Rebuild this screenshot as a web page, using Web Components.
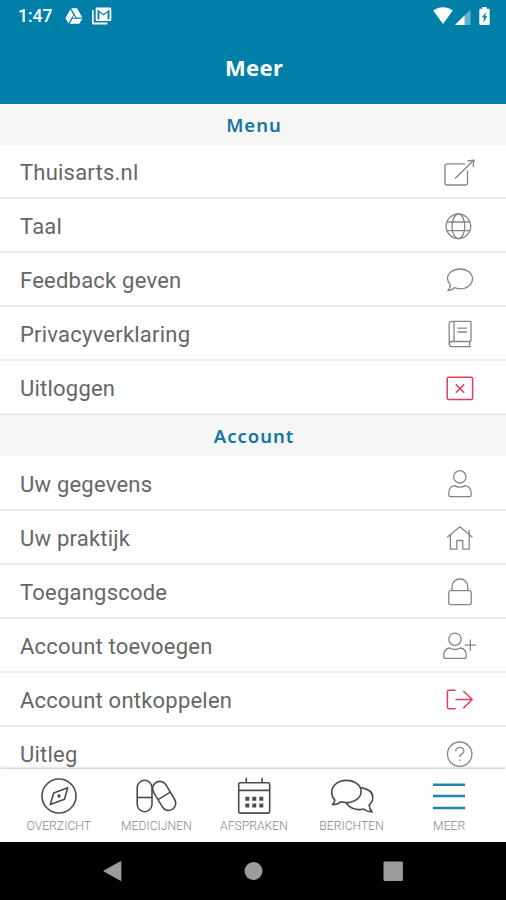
<!DOCTYPE html>
<html lang="nl">
<head>
<meta charset="utf-8">
<title>Meer</title>
<style>
    html, body{
        margin: 0;
        height: 100%;
        overflow: hidden;
        font-family: Roboto, "Liberation Sans", sans-serif;
    }
</style>
</head>
<body>
<phone-screen>
    <status-bar slot="top" time="1:47"></status-bar>
    <title-bar slot="top">Meer</title-bar>
    <menu-section label="Menu">
        <menu-row icon="external">Thuisarts.nl</menu-row>
        <menu-row icon="globe">Taal</menu-row>
        <menu-row icon="comment">Feedback geven</menu-row>
        <menu-row icon="book">Privacyverklaring</menu-row>
        <menu-row icon="close" danger>Uitloggen</menu-row>
    </menu-section>
    <menu-section label="Account">
        <menu-row icon="user">Uw gegevens</menu-row>
        <menu-row icon="home">Uw praktijk</menu-row>
        <menu-row icon="lock">Toegangscode</menu-row>
        <menu-row icon="useradd">Account toevoegen</menu-row>
        <menu-row icon="exit" danger>Account ontkoppelen</menu-row>
        <menu-row icon="help">Uitleg</menu-row>
    </menu-section>
    <tab-bar slot="bottom">
        <tab-item icon="compass">OVERZICHT</tab-item>
        <tab-item icon="pills">MEDICIJNEN</tab-item>
        <tab-item icon="calendar">AFSPRAKEN</tab-item>
        <tab-item icon="chats">BERICHTEN</tab-item>
        <tab-item icon="menu" active>MEER</tab-item>
    </tab-bar>
    <android-nav slot="bottom"></android-nav>
</phone-screen>

<script>
// 40x40 icons for the list rows
const rowIcons = {
    external: '<path d="M25 11.8H7q-2 0-2 2V31q0 2 2 2h18.5q2 0 2-2V18.5M15 26.5 33.5 8.5M27.5 9l6.5-.8-1 7"/>',
    globe: '<circle cx="18.4" cy="20.3" r="12.3"/><ellipse cx="18.4" cy="20.3" rx="6.4" ry="12.3"/><path d="M6.8 16h23.2M6.8 24.7h23.2"/>',
    comment: '<path d="M10.3 24.7C8.4 22.9 7.5 21 7.5 18.6 7.5 13.2 13 9 20 9s12.5 4.2 12.5 9.8S27 28.8 20 28.8c-2 0-3.9-.4-5.5-1.1-1.4 1.7-3.7 2.7-6.7 2.9 1.7-1.7 2.6-3.6 2.5-5.9z"/>',
    book: '<path d="M31 27.5V8.5q0-1.2-1.2-1.2H12q-2.8 0-2.8 2.8v19.7q0 2.8 2.8 2.8h19M31 27.5H12q-2.8 0-2.8 2.5M14 7.3v20.2M29.5 27.5v5M17.5 14.2h9.5M17.5 18h9.5"/>',
    close: '<rect x="7.2" y="9.2" width="25.4" height="22.4" rx="1.5"/><path d="m15.8 16.4 8.4 8.4m0-8.4-8.4 8.4"/>',
    user: '<circle cx="19.8" cy="13.8" r="6.2"/><path d="M14.3 22.6c3.6 2 7.4 2 11 0 3.8.6 5.9 3.6 5.9 8v1.4q0 1.6-1.6 1.6H10.4q-1.6 0-1.6-1.6v-1.4c0-4.4 1.7-7.4 5.5-8z"/>',
    home: '<path d="m7.2 20.3 12.6-10.5 12.6 10.5M10.4 17.8v14.4h6.4v-8.7h6v8.7h6.4V17.8M29.2 17.3v-4.6"/>',
    lock: '<rect x="8.8" y="19.6" width="22.4" height="14" rx="2"/><path d="M12 19.6v-3.8c0-10.4 15.8-10.4 15.8 0v3.8"/>',
    useradd: '<circle cx="15" cy="14.2" r="6.1"/><path d="M9.6 23c3.6 2 7.2 2 10.8 0 3.8.6 5.8 3.4 5.8 7.2v1.6q0 1.6-1.6 1.6H5.4q-1.6 0-1.6-1.6v-1.6c0-3.8 2-6.6 5.8-7.2zM24.8 20.2h11M30.3 14.6v11.2"/>',
    exit: '<path d="M15.6 11.3H9q-1.6 0-1.6 1.6v15.2q0 1.6 1.6 1.6h6.6M15.5 20.5h16.7M23.4 12l8.8 8.5-8.8 8.6"/>',
    help: '<circle cx="19.7" cy="21.2" r="12.2"/><path d="M15.7 18.3c.1-5.2 8.3-5 8.2-.4 0 3-4.1 3-4.1 6.2M19.8 26.4v1.7"/>'
};

// 48x44 icons for the bottom tabs
const tabIcons = {
    compass: '<circle cx="24" cy="22" r="17"/><path d="M32.7 13.8 29.5 25.3 15.3 30.6 18.7 19z"/><circle cx="24" cy="22" r=".9" fill="currentColor"/>',
    pills: '<rect x="5.2" y="6.3" width="14.8" height="31.4" rx="7.4"/><path d="M5.2 23.5H20"/><g transform="rotate(-31 32 22)"><rect x="25" y="6.3" width="14.4" height="31.4" rx="7.2"/><path d="M25 22h14.4"/></g>',
    calendar: '<rect x="8.7" y="8.7" width="31" height="30.4" rx="1.5"/><path d="M8.7 16.4h31M16.3 3.8v4.9M32.1 3.8v4.9"/><path stroke-width="4" stroke-dasharray="4 3" d="M15.3 24.7h18M15.3 31.4h18"/>',
    chats: '<path d="M6.8 26.1C4.8 23.9 3.7 21.3 3.7 18.1c0-6.6 6.4-11.7 14.7-11.7s14.7 4.8 14.7 11-6.4 11.2-14.7 11.2c-2 0-3.8-.3-5.5-.8-2.1 1.8-4.9 2.8-8.5 2.9 1.5-1.4 2.3-2.9 2.4-4.6z"/><path d="M33 13.6c6.9 1.2 11.8 4.8 11.8 9.9 0 3-1.4 5.5-3.7 7.5.1 2.6 1 4.9 3 6.9-3.5-.1-6.4-1.1-8.4-2.9-7.5 1.8-14.6-.7-17.5-6.4"/>',
    menu: '<path stroke-width="2.4" d="M8 10.7h32M8 22h32M8 34h32"/>'
};

class PhoneScreen extends HTMLElement{
    constructor(){
        super();
        this.attachShadow({mode: 'open'});
        this.shadowRoot.innerHTML = `
            <style>
                :host{
                    display: flex;
                    flex-direction: column;
                    width: 506px;
                    height: 900px;
                    background: #fff;
                }
                main{
                    flex: 1;
                    min-height: 0;
                    overflow: hidden;
                }
            </style>
            <slot name="top"></slot>
            <main><slot></slot></main>
            <slot name="bottom"></slot>
        `;
    }
}

class StatusBar extends HTMLElement{
    constructor(){
        super();
        this.attachShadow({mode: 'open'});
        this.shadowRoot.innerHTML = `
            <style>
                :host{
                    display: flex;
                    align-items: center;
                    height: 32px;
                    padding: 0 16px 0 18px;
                    box-sizing: border-box;
                    background: #007fa9;
                    color: #fff;
                }
                .time{
                    width: 47px;
                    font-size: 17.5px;
                    font-weight: 500;
                }
                .space{
                    flex: 1;
                }
                svg{
                    display: block;
                    fill: currentColor;
                }
            </style>
            <span class="time"></span>
            <svg width="18" height="20"><path d="M6 2.2h6l5.4 9.4h-5.8L6.3 2.6zM5.3 3.5 8.4 8.7 3.4 17.2.4 12.2zM7.6 12.8h9.8l-3.1 5H4.7zM9 9.2l1.5 2.5H7.6z"/></svg>
            <svg width="20" height="20" style="margin-left:9px"><path d="M-.2 4.2h1.9v12.4h13.7v1.9H1.4q-1.6 0-1.6-1.6z"/><path fill-rule="evenodd" d="M5 1.4h13q1.3 0 1.3 1.3v11q0 1.3-1.3 1.3H5q-1.3 0-1.3-1.3v-11Q3.7 1.4 5 1.4zm.5 2v10h1.9V6.2l4.1 3.2 4.1-3.2v7.2h1.9V3.4l-6 4.7z"/></svg>
            <span class="space"></span>
            <svg width="20" height="20"><path d="M.2 4.6C6 .1 14 .1 19.8 4.6L10 18z"/></svg>
            <svg width="17" height="20" style="margin-left:2px"><path opacity=".4" d="M0 19 15.5 3.5V19z"/><path d="M0 19 9.5 9.5V19z"/></svg>
            <svg width="11" height="20" style="margin-left:7px"><path fill-rule="evenodd" d="M3.3 1h4.4v1.8h1.9q1.1 0 1.1 1.1v14.1q0 1.1-1.1 1.1H1.4Q.3 19.1.3 18V3.9q0-1.1 1.1-1.1h1.9zM7.3 6l-4.5 5.3h2.3l-.9 5.2 4.2-6.2H6z"/></svg>
        `;
    }
    connectedCallback(){
        this.shadowRoot.querySelector('.time').textContent = this.getAttribute('time');
    }
}

class TitleBar extends HTMLElement{
    constructor(){
        super();
        this.attachShadow({mode: 'open'});
        this.shadowRoot.innerHTML = `
            <style>
                :host{
                    display: flex;
                    align-items: center;
                    justify-content: center;
                    height: 72px;
                    padding: 0 0 2px 2px;
                    box-sizing: border-box;
                    background: #007fa9;
                    color: #fff;
                    font: 700 22px "Noto Sans", sans-serif;
                    letter-spacing: 0.3px;
                }
            </style>
            <slot></slot>
        `;
    }
}

class MenuSection extends HTMLElement{
    constructor(){
        super();
        this.attachShadow({mode: 'open'});
        this.shadowRoot.innerHTML = `
            <style>
                :host{
                    display: block;
                }
                header{
                    display: flex;
                    align-items: center;
                    justify-content: center;
                    height: 41px;
                    padding: 0 0 1px 2px;
                    box-sizing: border-box;
                    background: #f6f6f6;
                    color: #12769f;
                    font: 600 18.5px "Noto Sans", sans-serif;
                    letter-spacing: 1px;
                }
            </style>
            <header></header>
            <slot></slot>
        `;
    }
    connectedCallback(){
        this.shadowRoot.querySelector('header').textContent = this.getAttribute('label');
    }
}

class MenuRow extends HTMLElement{
    constructor(){
        super();
        this.attachShadow({mode: 'open'});
        this.shadowRoot.innerHTML = `
            <style>
                :host{
                    display: flex;
                    align-items: center;
                    justify-content: space-between;
                    height: 54.1px;
                    padding: 1px 26px 0 20px;
                    box-sizing: border-box;
                    border-bottom: 2px solid #ececec;
                    color: #666;
                    font-size: 22px;
                    letter-spacing: 0.22px;
                }
                span{
                    padding-top: 2px;
                }
                svg{
                    width: 40px;
                    height: 40px;
                    overflow: visible;
                    fill: none;
                    stroke: #858585;
                    stroke-width: 1.3;
                    stroke-linejoin: round;
                }
                :host([danger]) svg{
                    stroke: #e2405c;
                    stroke-width: 1.5;
                }
            </style>
            <span><slot></slot></span>
            <svg viewBox="0 0 40 40"></svg>
        `;
    }
    connectedCallback(){
        this.shadowRoot.querySelector('svg').innerHTML = rowIcons[this.getAttribute('icon')];
    }
}

class TabBar extends HTMLElement{
    constructor(){
        super();
        this.attachShadow({mode: 'open'});
        this.shadowRoot.innerHTML = `
            <style>
                :host{
                    display: grid;
                    grid-template-columns: repeat(5, 97.6px);
                    justify-content: center;
                    height: 73px;
                    padding-left: 2px;
                    box-sizing: border-box;
                    background: #fff;
                    box-shadow: 0 -1px 3px rgba(0, 0, 0, 0.22);
                    z-index: 1;
                }
            </style>
            <slot></slot>
        `;
    }
}

class TabItem extends HTMLElement{
    constructor(){
        super();
        this.attachShadow({mode: 'open'});
        this.shadowRoot.innerHTML = `
            <style>
                :host{
                    display: flex;
                    flex-direction: column;
                    align-items: center;
                    padding-top: 5px;
                    color: #4c4c4c;
                }
                :host([active]){
                    color: #2681ab;
                }
                svg{
                    width: 48px;
                    height: 44px;
                    fill: none;
                    stroke: currentColor;
                    stroke-width: 1.6;
                    stroke-linejoin: round;
                }
                span{
                    font-size: 12.2px;
                    font-weight: 300;
                    line-height: 16px;
                    color: #858585;
                }
            </style>
            <svg viewBox="0 0 48 44"></svg>
            <span><slot></slot></span>
        `;
    }
    connectedCallback(){
        this.shadowRoot.querySelector('svg').innerHTML = tabIcons[this.getAttribute('icon')];
    }
}

class AndroidNav extends HTMLElement{
    constructor(){
        super();
        this.attachShadow({mode: 'open'});
        this.shadowRoot.innerHTML = `
            <style>
                :host{
                    display: flex;
                    align-items: center;
                    justify-content: space-between;
                    height: 58px;
                    padding: 0 102px;
                    box-sizing: border-box;
                    background: #000;
                    z-index: 2;
                }
                svg{
                    width: 22px;
                    height: 22px;
                    fill: #9c9c9c;
                }
            </style>
            <svg><path d="M1 11 19.3.8v20.4z"/></svg>
            <svg><circle cx="11.5" cy="11" r="9"/></svg>
            <svg><rect x="1.5" y="1.5" width="19.4" height="19.4" rx="1.2"/></svg>
        `;
    }
}

window.customElements.define('phone-screen', PhoneScreen);
window.customElements.define('status-bar', StatusBar);
window.customElements.define('title-bar', TitleBar);
window.customElements.define('menu-section', MenuSection);
window.customElements.define('menu-row', MenuRow);
window.customElements.define('tab-bar', TabBar);
window.customElements.define('tab-item', TabItem);
window.customElements.define('android-nav', AndroidNav);
</script>
</body>
</html>
